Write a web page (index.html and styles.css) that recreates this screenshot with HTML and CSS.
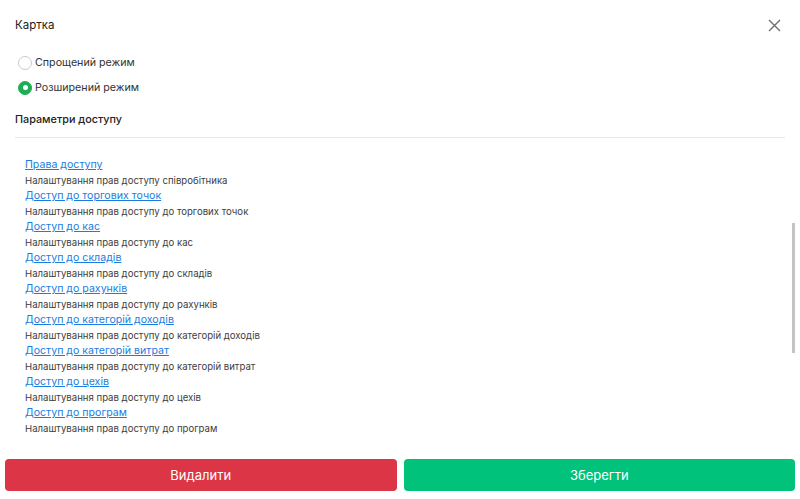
FILE: index.html
```html
<!DOCTYPE html>
<html lang="uk">
  <head>
    <meta charset="UTF-8" />
    <title>Картка</title>
    <link rel="stylesheet" href="styles.css">
  </head>
  <body>
    <div class="modal">
      <div class="modal-header">
        <div class="modal-title">Картка</div>
        <button class="close" aria-label="Закрити">
          <svg width="13" height="13" viewBox="0 0 13 13">
            <path d="M1 1L12 12M12 1L1 12" stroke="#6f6f6f" stroke-width="1.4" fill="none" />
          </svg>
        </button>
      </div>

      <div class="modes">
        <label class="mode">
          <input type="radio" name="mode" />
          <span class="radio"></span>
          Спрощений режим
        </label>
        <label class="mode">
          <input type="radio" name="mode" checked />
          <span class="radio"></span>
          Розширений режим
        </label>
      </div>

      <div class="section-title">Параметри доступу</div>

      <div class="params">
        <div class="param">
          <a href="#">Права доступу</a>
          <div class="hint">Налаштування прав доступу співробітника</div>
        </div>
        <div class="param">
          <a href="#">Доступ до торгових точок</a>
          <div class="hint">Налаштування прав доступу до торгових точок</div>
        </div>
        <div class="param">
          <a href="#">Доступ до кас</a>
          <div class="hint">Налаштування прав доступу до кас</div>
        </div>
        <div class="param">
          <a href="#">Доступ до складів</a>
          <div class="hint">Налаштування прав доступу до складів</div>
        </div>
        <div class="param">
          <a href="#">Доступ до рахунків</a>
          <div class="hint">Налаштування прав доступу до рахунків</div>
        </div>
        <div class="param">
          <a href="#">Доступ до категорій доходів</a>
          <div class="hint">Налаштування прав доступу до категорій доходів</div>
        </div>
        <div class="param">
          <a href="#">Доступ до категорій витрат</a>
          <div class="hint">Налаштування прав доступу до категорій витрат</div>
        </div>
        <div class="param">
          <a href="#">Доступ до цехів</a>
          <div class="hint">Налаштування прав доступу до цехів</div>
        </div>
        <div class="param">
          <a href="#">Доступ до програм</a>
          <div class="hint">Налаштування прав доступу до програм</div>
        </div>
      </div>
    </div>

    <div class="scroll-thumb"></div>

    <div class="footer">
      <button class="btn btn-delete">Видалити</button>
      <button class="btn btn-save">Зберегти</button>
    </div>
  </body>
</html>
```

FILE: styles.css
```css
body {
  margin: 0;
  font-family: Inter, "Noto Sans", sans-serif;
  color: #222;
  background: #fff;
}

.modal {
  padding: 0 15px;
}

.modal-header {
  height: 46px;
  display: flex;
  align-items: center;
  justify-content: space-between;
}

.modal-title {
  font-size: 11.5px;
  line-height: 16px;
  padding-top: 3px;
}

.close {
  border: 0;
  background: none;
  padding: 0;
  margin: 4px 4px 0 0;
  width: 13px;
  height: 13px;
  cursor: pointer;
}

.close svg {
  display: block;
}

.modes {
  margin-top: 4px;
}

.mode {
  display: flex;
  align-items: center;
  height: 25px;
  font-size: 10.7px;
  color: #333;
  padding-left: 3px;
  cursor: pointer;
}

.mode input {
  display: none;
}

.radio {
  width: 12px;
  height: 12px;
  border: 1px solid #c9c9c9;
  border-radius: 50%;
  margin-right: 3px;
  box-sizing: content-box;
  position: relative;
}

.mode input:checked + .radio {
  background: #1fae55;
  border-color: #1fae55;
}

.mode input:checked + .radio::after {
  content: "";
  position: absolute;
  left: 3.5px;
  top: 3.5px;
  width: 5px;
  height: 5px;
  border-radius: 50%;
  background: #fff;
}

.section-title {
  margin-top: 10px;
  font-size: 10.8px;
  line-height: 20px;
  font-weight: 500;
  padding-bottom: 7px;
  border-bottom: 1px solid #e6e6e6;
}

.params {
  padding: 19px 0 0 10px;
}

.param a {
  display: block;
  width: max-content;
  font-size: 10.6px;
  line-height: 16px;
  color: #1a7de0;
  text-decoration: underline;
}

.hint {
  font-size: 9.6px;
  line-height: 15px;
  color: #3d3d3d;
}

.scroll-thumb {
  position: absolute;
  left: 792px;
  top: 223px;
  width: 3px;
  height: 130px;
  background: #c4c4c4;
}

.footer {
  display: flex;
  gap: 7px;
  padding: 23px 5px 0;
}

.btn {
  flex: 1;
  height: 32px;
  border: 0;
  border-radius: 4px;
  color: #fff;
  font-family: inherit;
  font-size: 13px;
  cursor: pointer;
}

.btn-delete {
  background: #dc3545;
}

.btn-save {
  background: #00c27a;
}
```
